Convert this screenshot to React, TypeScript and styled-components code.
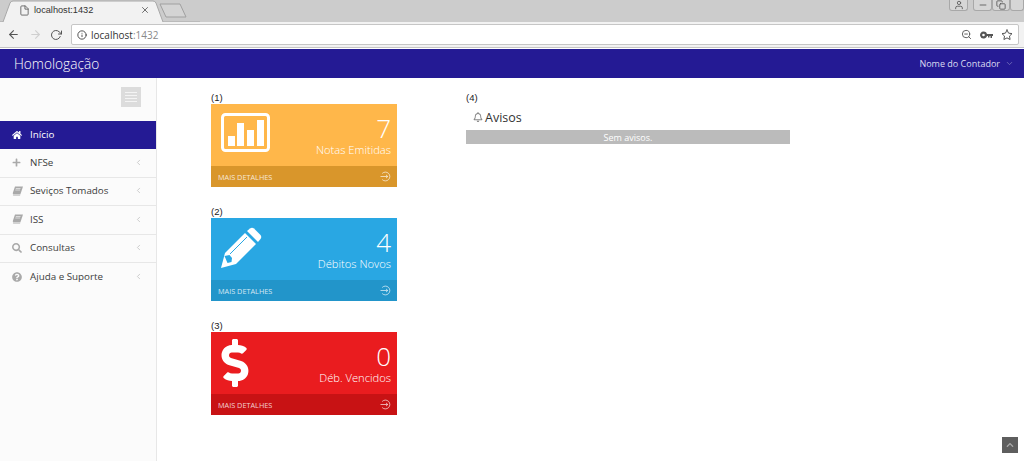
import { ReactNode } from 'react'
import styled, { createGlobalStyle } from 'styled-components'
import { FaChevronUp, FaDollarSign, FaHome, FaPlus, FaQuestionCircle, FaRegBell, FaSearch } from 'react-icons/fa'
import { FiArrowLeft, FiArrowRight, FiChevronDown, FiChevronLeft, FiCopy, FiFile, FiInfo, FiMinus, FiRotateCw, FiStar, FiUser, FiX, FiZoomOut } from 'react-icons/fi'

const GlobalStyle = createGlobalStyle`
  html, body { margin: 0; padding: 0; background: #fff; overflow: hidden; }
  body { font-family: "Open Sans", "Liberation Sans", sans-serif; }
  * { box-sizing: border-box; }
`

const Page = styled.div`
  position: relative;
  width: 1024px;
  height: 461px;
  overflow: hidden;
  display: flex;
  flex-direction: column;
`

/* browser frame */
const TabStrip = styled.div`
  position: relative;
  height: 22px;
  flex: none;
  background: #cccccc;
  display: flex;
  justify-content: flex-end;
`

const TabShape = styled.svg`
  position: absolute;
  left: 0;
  top: 0;
`

const TabTitle = styled.div`
  position: absolute;
  left: 19px;
  top: 2px;
  width: 131px;
  height: 16px;
  display: flex;
  align-items: center;
  font-size: 9.2px;
  color: #333;
  font-family: "Liberation Sans", sans-serif;
  svg:first-child { margin-right: 4px; color: #666; }
  svg:last-child { margin-left: auto; color: #555; }
`

const WindowButton = styled.div<{ $w: number; $gap?: number }>`
  width: ${p => p.$w}px;
  height: 11px;
  margin-left: ${p => p.$gap ?? 0}px;
  background: #d6d6d6;
  border: 1px solid #a8a8a8;
  border-top: 0;
  border-radius: 0 0 3px 3px;
  display: flex;
  align-items: center;
  justify-content: center;
  color: #555;
`

const Toolbar = styled.div`
  height: 26px;
  flex: none;
  background: #f2f2f2;
  border-bottom: 1px solid #c4c4c4;
  display: flex;
  align-items: center;
  padding: 0 5px 0 7px;
  gap: 8.5px;
`

const NavIcon = styled.span<{ $dim?: boolean }>`
  display: flex;
  color: ${p => (p.$dim ? '#cfcfcf' : '#555')};
`

const Omnibox = styled.div`
  flex: 1;
  height: 21px;
  margin-left: 0.5px;
  background: #fff;
  border: 1px solid #c6c6c6;
  border-radius: 2px;
  display: flex;
  align-items: center;
  padding: 0 5px;
  font-size: 10px;
  color: #333;
`

const Host = styled.span`
  margin-left: 4px;
  span { color: #8a8a8a; }
`

const OmniIcons = styled.div`
  margin-left: auto;
  display: flex;
  align-items: center;
  gap: 8px;
  color: #555;
`

/* application */
const Navbar = styled.header`
  height: 29px;
  flex: none;
  margin-top: 1px;
  background: #241a94;
  color: #fff;
  display: flex;
  align-items: center;
  justify-content: space-between;
  padding: 0 10px 0 14px;
`

const Brand = styled.div`
  font-size: 13.7px;
  font-weight: 300;
`

const UserMenu = styled.div`
  display: flex;
  align-items: center;
  font-size: 9px;
  color: #dcdcf2;
  gap: 5px;
  svg { color: #7d78bf; }
`

const Body = styled.div`
  flex: 1;
  display: flex;
  min-height: 0;
`

const Sidebar = styled.nav`
  width: 157px;
  flex: none;
  background: #fbfbfb;
  border-right: 1px solid #e7e7e7;
  display: flex;
  flex-direction: column;
`

const SidebarTop = styled.div`
  height: 43px;
  padding: 9px 15px 0 0;
  display: flex;
  justify-content: flex-end;
`

const Hamburger = styled.div`
  width: 20px;
  height: 20px;
  background: #dcdcdc;
  display: flex;
  flex-direction: column;
  justify-content: center;
  align-items: center;
  gap: 2px;
  i { display: block; width: 12px; height: 1px; background: #f4f4f4; }
`

const MenuItem = styled.div<{ $active?: boolean }>`
  height: 28.4px;
  display: flex;
  align-items: center;
  padding: 0 13px 1px 12px;
  font-size: 9.8px;
  background: ${p => (p.$active ? '#241a94' : 'transparent')};
  color: ${p => (p.$active ? '#fff' : '#3c3c3c')};
  border-bottom: ${p => (p.$active ? '0' : '1px solid #e7e7e7')};
  &:last-child { border-bottom: 0; }
`

const MenuIcon = styled.span<{ $active?: boolean }>`
  width: 18px;
  display: flex;
  color: ${p => (p.$active ? '#fff' : '#a9a9a9')};
`

const MenuChevron = styled.span`
  margin-left: auto;
  display: flex;
  color: #bdbdbd;
`

const Main = styled.main`
  flex: 1;
  padding: 15px 0 0 54px;
  display: flex;
  gap: 69px;
`

const CardColumn = styled.section`
  width: 186px;
  display: flex;
  flex-direction: column;
  gap: 20px;
`

const Label = styled.div`
  font-family: "Liberation Sans", sans-serif;
  font-size: 9.5px;
  line-height: 9px;
  margin-bottom: 2px;
  color: #222;
`

const Card = styled.div<{ $bg: string; $foot: string }>`
  height: 83px;
  color: #fff;
  background: ${p => p.$bg};
  display: flex;
  flex-direction: column;
  --foot: ${p => p.$foot};
`

const CardBody = styled.div`
  flex: 1;
  position: relative;
  display: flex;
  flex-direction: column;
  align-items: flex-end;
  padding: 11px 6px 0 0;
`

const CardIcon = styled.div`
  position: absolute;
  left: 10px;
  top: 9px;
  display: flex;
`

const DollarIcon = styled(FaDollarSign)`
  margin: -2px 0 0 -10.5px;
`

const CardNumber = styled.div`
  font-size: 26px;
  font-weight: 300;
  line-height: 27px;
`

const CardTitle = styled.div`
  font-size: 11.2px;
  font-weight: 300;
  line-height: 15px;
`

const CardFooter = styled.div`
  height: 21px;
  flex: none;
  background: var(--foot);
  display: flex;
  align-items: center;
  justify-content: space-between;
  padding: 0 6px 0 7px;
  font-size: 7.3px;
  color: rgba(255, 255, 255, 0.8);
`

const NoticeColumn = styled.section`
  width: 324px;
`

const NoticeTitle = styled.div`
  display: flex;
  align-items: center;
  height: 16px;
  margin: 7px 0 5px 7px;
  font-size: 12.5px;
  color: #333;
  gap: 2px;
  svg { color: #888; }
`

const NoticeBar = styled.div`
  height: 14px;
  background: #bbbbbb;
  color: #fff;
  font-size: 9px;
  line-height: 15px;
  text-align: center;
`

const ScrollTop = styled.div`
  position: absolute;
  left: 1002px;
  top: 437px;
  width: 16px;
  height: 16px;
  background: #5e5e5e;
  color: #a9a9a9;
  display: flex;
  align-items: center;
  justify-content: center;
`

const ArrowCircle = () => (
  <svg width='11' height='11' viewBox='0 0 11 11' fill='none' stroke='currentColor' strokeWidth='0.8'>
    <path d='M2.200 2.500a4.400 4.400 0 1 1 0 6' />
    <path d='M0.500 5.500h7M6 3.900 7.800 5.500 6 7.100' />
  </svg>
)

const ChartIcon = () => (
  <svg width='50' height='40' viewBox='0 0 50 40' fill='#fff'>
    <rect x='1.500' y='1.500' width='46' height='36' rx='3' fill='none' stroke='#fff' strokeWidth='3' />
    <rect x='7' y='23' width='7' height='10' />
    <rect x='16' y='10' width='7' height='23' />
    <rect x='26' y='17' width='7' height='16' />
    <rect x='36' y='7' width='7' height='26' />
  </svg>
)

const PencilIcon = () => (
  <svg width='41' height='41' viewBox='0 0 41 41'>
    <path d='M0 41 4 26 24 6 35 17 15 37Z' fill='#fff' />
    <path d='M26 4 29 1.500Q31 0 33 1.500L39.500 8Q41 10 39.500 12L37 15Z' fill='#fff' />
    <path d='M9 27 26 10' stroke='#29a7e3' strokeWidth='1' fill='none' />
    <path d='M3.500 29 8.500 28 11 31 10.500 35 6.500 36Z' fill='#29a7e3' />
  </svg>
)

const BookIcon = () => (
  <svg width='11' height='10' viewBox='0 0 11 10' fill='currentColor'>
    <path d='M3 0.500H11L8.500 8H1.500Q0.500 8 0.800 7Z' />
    <path d='M1 8.500H8.500L8 9.500H1.500Q0.500 9.500 1 8.500Z' />
    <path d='M3.800 2.500H8.500M3.300 4H8' stroke='#fbfbfb' strokeWidth='0.6' />
  </svg>
)

const KeyIcon = () => (
  <svg width='13' height='8' viewBox='0 0 13 8' fill='currentColor'>
    <path d='M3.500 0.500a3.500 3.500 0 1 1-3.300 4.500 3.500 3.500 0 0 1 3.300-4.500Zm0 2.200a1.300 1.300 0 1 0 0 2.600 1.300 1.300 0 0 0 0-2.600Z' fillRule='evenodd' />
    <path d='M6.500 3H13V5H12V7H10.500V5H9.500V6.500H8V5H6.500Z' />
  </svg>
)

const SummaryCard = ({ label, bg, foot, icon, value, title }: {
  label: string
  bg: string
  foot: string
  icon: ReactNode
  value: number
  title: string
}) => (
  <div>
    <Label>{label}</Label>
    <Card $bg={bg} $foot={foot}>
      <CardBody>
        <CardIcon>{icon}</CardIcon>
        <CardNumber>{value}</CardNumber>
        <CardTitle>{title}</CardTitle>
      </CardBody>
      <CardFooter>
        MAIS DETALHES
        <ArrowCircle />
      </CardFooter>
    </Card>
  </div>
)

const menu = [
  { text: 'NFSe', icon: <FaPlus size={9} /> },
  { text: 'Seviços Tomados', icon: <BookIcon /> },
  { text: 'ISS', icon: <BookIcon /> },
  { text: 'Consultas', icon: <FaSearch size={10} /> },
  { text: 'Ajuda e Suporte', icon: <FaQuestionCircle size={10} /> },
]

export default function App() {
  return (
    <Page>
      <GlobalStyle />
      <TabStrip>
        <TabShape width='200' height='22' viewBox='0 0 200 22'>
          <path d='M0 22H3L10 3Q11 1 13 1H153Q155 1 156 3L163 22H200' fill='#f2f2f2' stroke='#a8a8a8' />
          <path d='M160 4H180L186 17H166Z' fill='#d4d4d4' stroke='#a0a0a0' />
        </TabShape>
        <TabTitle>
          <FiFile size={11} />
          localhost:1432
          <FiX size={10} />
        </TabTitle>
        <WindowButton $w={19}><FiUser size={10} /></WindowButton>
        <WindowButton $w={19} $gap={5}><FiMinus size={10} /></WindowButton>
        <WindowButton $w={18}><FiCopy size={10} /></WindowButton>
        <WindowButton $w={14} />
      </TabStrip>
      <Toolbar>
        <NavIcon><FiArrowLeft size={13} /></NavIcon>
        <NavIcon $dim><FiArrowRight size={13} /></NavIcon>
        <NavIcon><FiRotateCw size={12} /></NavIcon>
        <Omnibox>
          <FiInfo size={10} />
          <Host>localhost<span>:1432</span></Host>
          <OmniIcons>
            <FiZoomOut size={11} />
            <KeyIcon />
            <FiStar size={12} />
          </OmniIcons>
        </Omnibox>
      </Toolbar>
      <Navbar>
        <Brand>Homologação</Brand>
        <UserMenu>
          Nome do Contador
          <FiChevronDown size={9} />
        </UserMenu>
      </Navbar>
      <Body>
        <Sidebar>
          <SidebarTop>
            <Hamburger><i /><i /><i /><i /></Hamburger>
          </SidebarTop>
          <MenuItem $active>
            <MenuIcon $active><FaHome size={10} /></MenuIcon>
            Início
          </MenuItem>
          {menu.map(item => (
            <MenuItem key={item.text}>
              <MenuIcon>{item.icon}</MenuIcon>
              {item.text}
              <MenuChevron><FiChevronLeft size={9} /></MenuChevron>
            </MenuItem>
          ))}
        </Sidebar>
        <Main>
          <CardColumn>
            <SummaryCard label='(1)' bg='#ffb74a' foot='#d9962b' icon={<ChartIcon />} value={7} title='Notas Emitidas' />
            <SummaryCard label='(2)' bg='#29a7e3' foot='#2295ca' icon={<PencilIcon />} value={4} title='Débitos Novos' />
            <SummaryCard label='(3)' bg='#ea1c1f' foot='#c81214' icon={<DollarIcon size={48} />} value={0} title='Déb. Vencidos' />
          </CardColumn>
          <NoticeColumn>
            <Label>(4)</Label>
            <NoticeTitle>
              <FaRegBell size={10} />
              Avisos
            </NoticeTitle>
            <NoticeBar>Sem avisos.</NoticeBar>
          </NoticeColumn>
        </Main>
      </Body>
      <ScrollTop><FaChevronUp size={8} /></ScrollTop>
    </Page>
  )
}
